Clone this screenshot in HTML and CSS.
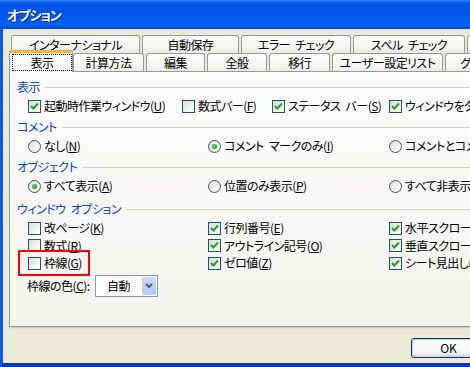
FILE: index.html
```html
<!DOCTYPE html>
<html lang="ja">
<head>
<meta charset="utf-8">
<title>オプション</title>
<link rel="stylesheet" href="styles.css">
</head>
<body>
<div class="window">
  <div class="titlebar"><span class="title">オプション</span></div>
  <div class="frame">
    <div class="tabs">
      <div class="tabrow">
        <div class="tab w129">インターナショナル</div>
        <div class="tab w97">自動保存</div>
        <div class="tab w110">エラー チェック</div>
        <div class="tab w112">スペル チェック</div>
        <div class="tab w70">セキュリティ</div>
      </div>
      <div class="tabrow">
        <div class="tab sel"><span class="focus">表示</span></div>
        <div class="tab w71">計算方法</div>
        <div class="tab w59">編集</div>
        <div class="tab w60">全般</div>
        <div class="tab w61">移行</div>
        <div class="tab w111">ユーザー設定リスト</div>
        <div class="tab w60">グラフ</div>
        <div class="tab w40">色</div>
      </div>
    </div>
    <div class="panel">
      <div class="sec s1">表示</div>
      <div class="opts four">
        <div class="item"><span class="box"><svg width="9" height="9" viewBox="0 0 9 9"><polyline points="1,4 3.3,6.5 8,1.5" fill="none" stroke="#21A121" stroke-width="2"/></svg></span><span>起動時作業ウィンドウ(<u>U</u>)</span></div>
        <div class="item"><span class="box"></span><span>数式バー(<u>F</u>)</span></div>
        <div class="item"><span class="box"><svg width="9" height="9" viewBox="0 0 9 9"><polyline points="1,4 3.3,6.5 8,1.5" fill="none" stroke="#21A121" stroke-width="2"/></svg></span><span>ステータス バー(<u>S</u>)</span></div>
        <div class="item"><span class="box"><svg width="9" height="9" viewBox="0 0 9 9"><polyline points="1,4 3.3,6.5 8,1.5" fill="none" stroke="#21A121" stroke-width="2"/></svg></span><span>ウィンドウをタスク バーに表示(<u>W</u>)</span></div>
      </div>
      <div class="sec">コメント</div>
      <div class="opts">
        <div class="item"><span class="rb"></span><span>なし(<u>N</u>)</span></div>
        <div class="item"><span class="rb on"></span><span>コメント マークのみ(<u>I</u>)</span></div>
        <div class="item"><span class="rb"></span><span>コメントとコメント マーク(<u>C</u>)</span></div>
      </div>
      <div class="sec">オブジェクト</div>
      <div class="opts">
        <div class="item"><span class="rb on"></span><span>すべて表示(<u>A</u>)</span></div>
        <div class="item"><span class="rb"></span><span>位置のみ表示(<u>P</u>)</span></div>
        <div class="item"><span class="rb"></span><span>すべて非表示(<u>D</u>)</span></div>
      </div>
      <div class="sec s4">ウィンドウ オプション</div>
      <div class="opts win">
        <div class="item"><span class="box"></span><span>改ページ(<u>K</u>)</span></div>
        <div class="item"><span class="box"><svg width="9" height="9" viewBox="0 0 9 9"><polyline points="1,4 3.3,6.5 8,1.5" fill="none" stroke="#21A121" stroke-width="2"/></svg></span><span>行列番号(<u>E</u>)</span></div>
        <div class="item"><span class="box"><svg width="9" height="9" viewBox="0 0 9 9"><polyline points="1,4 3.3,6.5 8,1.5" fill="none" stroke="#21A121" stroke-width="2"/></svg></span><span>水平スクロール バー(<u>Z</u>)</span></div>
        <div class="item"><span class="box"></span><span>数式(<u>R</u>)</span></div>
        <div class="item"><span class="box"><svg width="9" height="9" viewBox="0 0 9 9"><polyline points="1,4 3.3,6.5 8,1.5" fill="none" stroke="#21A121" stroke-width="2"/></svg></span><span>アウトライン記号(<u>O</u>)</span></div>
        <div class="item"><span class="box"><svg width="9" height="9" viewBox="0 0 9 9"><polyline points="1,4 3.3,6.5 8,1.5" fill="none" stroke="#21A121" stroke-width="2"/></svg></span><span>垂直スクロール バー(<u>V</u>)</span></div>
        <div class="item marked"><span class="box"></span><span>枠線(<u>G</u>)</span></div>
        <div class="item"><span class="box"><svg width="9" height="9" viewBox="0 0 9 9"><polyline points="1,4 3.3,6.5 8,1.5" fill="none" stroke="#21A121" stroke-width="2"/></svg></span><span>ゼロ値(<u>Z</u>)</span></div>
        <div class="item"><span class="box"><svg width="9" height="9" viewBox="0 0 9 9"><polyline points="1,4 3.3,6.5 8,1.5" fill="none" stroke="#21A121" stroke-width="2"/></svg></span><span>シート見出し(<u>B</u>)</span></div>
      </div>
      <div class="combo-row">
        <span class="combo-label">枠線の色(<u>C</u>):</span>
        <div class="combo">
          <span class="combo-text">自動</span>
          <span class="combo-btn"><svg width="8" height="6" viewBox="0 0 8 6"><polyline points="1,1 4,4 7,1" fill="none" stroke="#4D6185" stroke-width="2"/></svg></span>
        </div>
      </div>
    </div>
    <div class="footer">
      <button class="btn default">OK</button>
      <button class="btn">キャンセル</button>
    </div>
  </div>
</div>
</body>
</html>
```
FILE: styles.css
```css
html, body {
  margin: 0;
  padding: 0;
  overflow: hidden;
  background: #ECE9D8;
}

.window {
  width: 580px;
  height: 367px;
  display: flex;
  flex-direction: column;
  font-family: "Noto Sans CJK JP", "Liberation Sans", sans-serif;
  font-size: 12px;
  line-height: 16px;
  letter-spacing: -0.5px;
  word-spacing: 3px;
  font-feature-settings: "palt";
  color: #000;
}

.titlebar {
  height: 29px;
  flex: none;
  display: flex;
  align-items: center;
  padding-left: 7px;
  background: linear-gradient(#3A8BFF 0, #0B60EC 2px, #0055E5 5px, #0056EA 14px, #0061F6 23px, #0059EC 26px, #0046CF 29px);
}

.title {
  color: #fff;
  font-weight: bold;
  font-size: 13px;
  letter-spacing: -1px;
  text-shadow: 1px 1px 0 #0A1E8C;
}

.frame {
  flex: 1;
  display: flex;
  flex-direction: column;
  background: #ECE9D8;
  border-left: 3px solid #0A58EE;
  border-right: 3px solid #0A58EE;
  border-bottom: 4px solid #0838B8;
  padding: 6px 6px 0;
}

.tabs {
  display: flex;
  flex-direction: column;
}

.tabrow {
  display: flex;
  gap: 2px;
  height: 18px;
  padding-left: 2px;
}

.tab {
  flex: none;
  display: flex;
  align-items: center;
  justify-content: center;
  box-sizing: border-box;
  border: 1px solid #919B9C;
  border-bottom: none;
  border-radius: 3px 3px 0 0;
  background: linear-gradient(#FFFFFF, #F7F7F4 50%, #ECEBE5);
  white-space: nowrap;
  overflow: hidden;
}

.w40 { width: 40px; }
.w59 { width: 59px; }
.w60 { width: 60px; }
.w61 { width: 61px; }
.w70 { width: 70px; }
.w71 { width: 71px; }
.w97 { width: 97px; }
.w110 { width: 110px; }
.w111 { width: 111px; }
.w112 { width: 112px; }
.w129 { width: 129px; }

.tab.sel {
  position: relative;
  z-index: 1;
  width: 64px;
  margin: -3px -2px -1px;
  border-top: 3px solid #F8B33B;
  background: #FCFCFE;
  padding: 1px 0 1px 2px;
  align-items: stretch;
}

.focus {
  flex: 1;
  display: flex;
  align-items: center;
  justify-content: center;
  border: 1px dotted #000;
}

.panel {
  box-sizing: border-box;
  height: 256px;
  border: 1px solid #919B9C;
  background: linear-gradient(#FCFCFE, #F4F3EE);
  box-shadow: 1px 1px 0 #D0CEBF, 2px 2px 0 #E2DFD0;
  padding-left: 7px;
}

.sec {
  display: flex;
  align-items: center;
  height: 16px;
  margin-top: 4px;
  color: #0046D5;
  white-space: nowrap;
}

.sec::after {
  content: "";
  flex: 1;
  height: 1px;
  background: #D0D0BF;
  margin-left: 5px;
}

.sec.s1 { margin-top: 7px; }
.sec.s4 { margin-top: 6px; }

.opts {
  display: grid;
  grid-template-columns: 180px 181px 1fr;
  padding-left: 11px;
  margin-top: 2px;
}

.opts.four {
  grid-template-columns: 154px 90px 117px 1fr;
}

.opts.win {
  grid-template-rows: 18px 17px 18px;
}

.item {
  display: flex;
  align-items: center;
  gap: 3px;
  height: 18px;
  white-space: nowrap;
}

.opts.win .item { height: auto; }

.item.marked {
  position: relative;
}

.item.marked::after {
  content: "";
  position: absolute;
  left: -10px;
  top: -4px;
  width: 72px;
  height: 26px;
  box-sizing: border-box;
  border: 2px solid #FF0000;
}

.box {
  flex: none;
  width: 13px;
  height: 13px;
  box-sizing: border-box;
  border: 1px solid #1C5180;
  background: linear-gradient(135deg, #DCDCD5, #FFFFFF);
  display: flex;
  align-items: center;
  justify-content: center;
}

.rb {
  flex: none;
  width: 13px;
  height: 13px;
  box-sizing: border-box;
  border: 1px solid #2C5886;
  border-radius: 50%;
  background: linear-gradient(135deg, #DCDCD5, #FFFFFF);
  display: flex;
  align-items: center;
  justify-content: center;
}

.rb.on::after {
  content: "";
  width: 5px;
  height: 5px;
  border-radius: 50%;
  background: radial-gradient(circle at 40% 40%, #6BDB66, #21A121 70%);
}

.combo-row {
  display: flex;
  align-items: center;
  gap: 4px;
  height: 22px;
  margin-top: 3px;
  padding-left: 10px;
  white-space: nowrap;
}

.combo-label {
  width: 64px;
}

.combo {
  width: 63px;
  height: 22px;
  box-sizing: border-box;
  border: 1px solid #7F9DB9;
  background: #fff;
  display: flex;
  align-items: stretch;
  padding: 1px;
}

.combo-text {
  flex: 1;
  display: flex;
  align-items: center;
  padding-left: 10px;
}

.combo-btn {
  width: 14px;
  display: flex;
  align-items: center;
  justify-content: center;
  border-radius: 2px;
  background: linear-gradient(#C9D7FA, #B3C6F3);
}

.footer {
  display: flex;
  justify-content: flex-end;
  gap: 10px;
  margin-top: 11px;
}

.btn {
  width: 75px;
  height: 20px;
  padding: 0;
  border: 1px solid #003C74;
  border-radius: 3px;
  background: linear-gradient(#FFFFFF, #F3F3EF 75%, #D8D3C8);
  font: inherit;
  color: #000;
}

.btn.default {
  box-shadow: inset 0 0 0 1px #B9D1F5;
}
```
